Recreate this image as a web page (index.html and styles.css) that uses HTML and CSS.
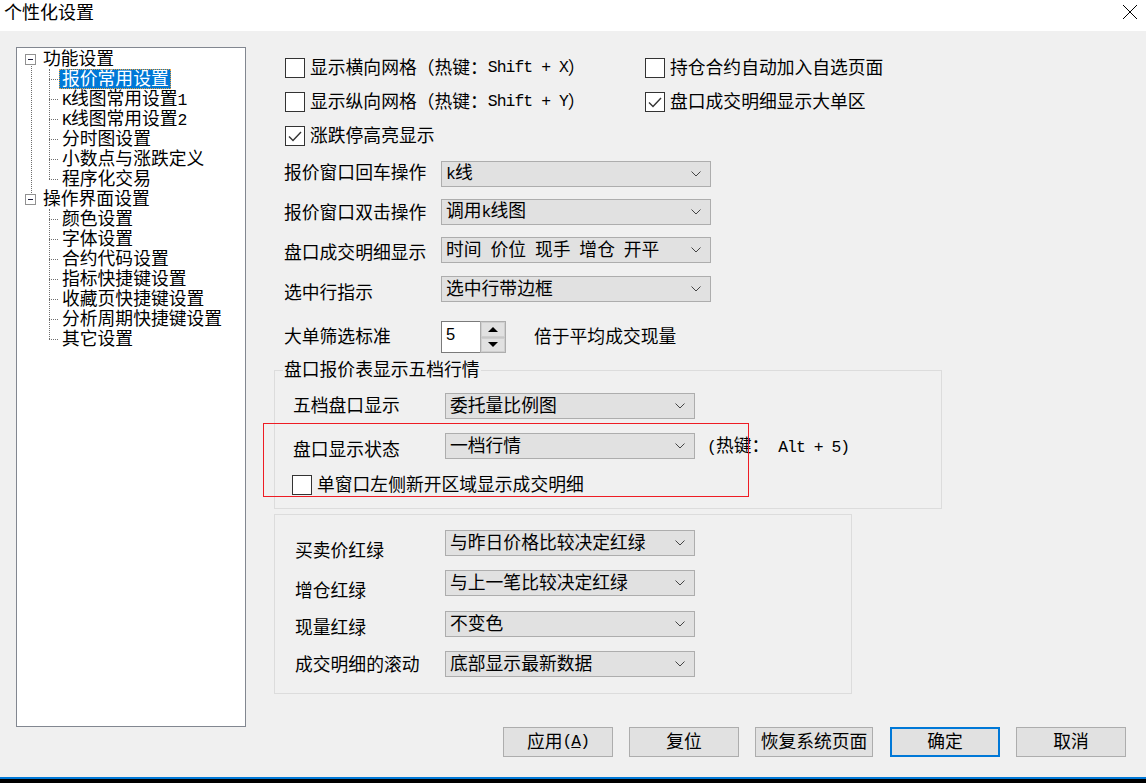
FILE: index.html
```html
<!DOCTYPE html>
<html lang="zh-CN">
<head>
<meta charset="utf-8">
<title>个性化设置</title>
<link rel="stylesheet" href="styles.css">
</head>
<body>
<div class="window">
  <header class="titlebar">
    <span class="title">个性化设置</span>
    <svg class="close" width="16" height="16" viewBox="0 0 16 16"><path d="M1 1L15 15M15 1L1 15" stroke="#000" stroke-width="1" fill="none"/></svg>
  </header>

  <div class="main">
    <nav class="tree">
      <ul class="roots">
        <li class="root has-next">
          <div class="node">
            <svg class="exp" width="11" height="11" viewBox="0 0 11 11"><rect x="0.5" y="0.5" width="10" height="10" fill="#fff" stroke="#919191"/><path d="M3 5.5H8" stroke="#1e1e3c"/></svg>
            <span class="label">功能设置</span>
          </div>
          <ul class="children">
            <li><span class="label sel">报价常用设置</span></li>
            <li><span class="label"><span class="m">K</span>线图常用设置<span class="m">1</span></span></li>
            <li><span class="label"><span class="m">K</span>线图常用设置<span class="m">2</span></span></li>
            <li><span class="label">分时图设置</span></li>
            <li><span class="label">小数点与涨跌定义</span></li>
            <li><span class="label">程序化交易</span></li>
          </ul>
        </li>
        <li class="root">
          <div class="node">
            <svg class="exp" width="11" height="11" viewBox="0 0 11 11"><rect x="0.5" y="0.5" width="10" height="10" fill="#fff" stroke="#919191"/><path d="M3 5.5H8" stroke="#1e1e3c"/></svg>
            <span class="label">操作界面设置</span>
          </div>
          <ul class="children">
            <li><span class="label">颜色设置</span></li>
            <li><span class="label">字体设置</span></li>
            <li><span class="label">合约代码设置</span></li>
            <li><span class="label">指标快捷键设置</span></li>
            <li><span class="label">收藏页快捷键设置</span></li>
            <li><span class="label">分析周期快捷键设置</span></li>
            <li><span class="label">其它设置</span></li>
          </ul>
        </li>
      </ul>
    </nav>

    <section class="panel">
      <div class="checks">
        <div class="check-row">
          <div class="cb wide"><span class="box"></span>显示横向网格（热键：<span class="m"> Shift + X</span>）</div>
          <div class="cb"><span class="box"></span>持仓合约自动加入自选页面</div>
        </div>
        <div class="check-row">
          <div class="cb wide"><span class="box"></span>显示纵向网格（热键：<span class="m"> Shift + Y</span>）</div>
          <div class="cb"><span class="box"><svg width="18" height="18" viewBox="0 0 18 18"><path d="M3 9.5L7 13.5L15 5" fill="none" stroke="#333" stroke-width="1.4"/></svg></span>盘口成交明细显示大单区</div>
        </div>
        <div class="check-row">
          <div class="cb"><span class="box"><svg width="18" height="18" viewBox="0 0 18 18"><path d="M3 9.5L7 13.5L15 5" fill="none" stroke="#333" stroke-width="1.4"/></svg></span>涨跌停高亮显示</div>
        </div>
      </div>

      <div class="fields">
        <div class="f-labels">
          <div>报价窗口回车操作</div>
          <div>报价窗口双击操作</div>
          <div>盘口成交明细显示</div>
          <div>选中行指示</div>
        </div>
        <div class="f-combos">
          <div class="combo w270"><span><span class="m">k</span>线</span><svg class="chev" width="10" height="6" viewBox="0 0 10 6"><path d="M0.5 0.5L5 5L9.5 0.5" fill="none" stroke="#444"/></svg></div>
          <div class="combo w270"><span>调用<span class="m">k</span>线图</span><svg class="chev" width="10" height="6" viewBox="0 0 10 6"><path d="M0.5 0.5L5 5L9.5 0.5" fill="none" stroke="#444"/></svg></div>
          <div class="combo w270"><span>时间&ensp;价位&ensp;现手&ensp;增仓&ensp;开平</span><svg class="chev" width="10" height="6" viewBox="0 0 10 6"><path d="M0.5 0.5L5 5L9.5 0.5" fill="none" stroke="#444"/></svg></div>
          <div class="combo w270 last"><span>选中行带边框</span><svg class="chev" width="10" height="6" viewBox="0 0 10 6"><path d="M0.5 0.5L5 5L9.5 0.5" fill="none" stroke="#444"/></svg></div>
        </div>
      </div>

      <div class="spin-row">
        <span class="lbl">大单筛选标准</span>
        <div class="spin">
          <div class="spin-edit">5</div>
          <div class="spin-btns">
            <span><svg width="10" height="5" viewBox="0 0 10 5"><path d="M5 0L10 5H0Z" fill="#000"/></svg></span>
            <span><svg width="10" height="5" viewBox="0 0 10 5"><path d="M0 0H10L5 5Z" fill="#000"/></svg></span>
          </div>
        </div>
        <span class="spin-note">倍于平均成交现量</span>
      </div>

      <fieldset class="group1">
        <legend>盘口报价表显示五档行情</legend>
        <div class="g1-body">
          <div class="row">
            <span class="lbl">五档盘口显示</span>
            <div class="combo w250"><span>委托量比例图</span><svg class="chev" width="10" height="6" viewBox="0 0 10 6"><path d="M0.5 0.5L5 5L9.5 0.5" fill="none" stroke="#444"/></svg></div>
          </div>
          <div class="row gap14">
            <span class="lbl dn4">盘口显示状态</span>
            <div class="combo w250"><span>一档行情</span><svg class="chev" width="10" height="6" viewBox="0 0 10 6"><path d="M0.5 0.5L5 5L9.5 0.5" fill="none" stroke="#444"/></svg></div>
            <span class="hotkey"><span class="m">(</span>热键：<span class="m"> Alt + 5)</span></span>
          </div>
          <div class="cb g1-cb"><span class="box"></span>单窗口左侧新开区域显示成交明细</div>
        </div>
      </fieldset>

      <div class="group2">
        <div class="row">
          <span class="lbl dn8">买卖价红绿</span>
          <div class="combo w250"><span>与昨日价格比较决定红绿</span><svg class="chev" width="10" height="6" viewBox="0 0 10 6"><path d="M0.5 0.5L5 5L9.5 0.5" fill="none" stroke="#444"/></svg></div>
        </div>
        <div class="row gap14">
          <span class="lbl dn8">增仓红绿</span>
          <div class="combo w250"><span>与上一笔比较决定红绿</span><svg class="chev" width="10" height="6" viewBox="0 0 10 6"><path d="M0.5 0.5L5 5L9.5 0.5" fill="none" stroke="#444"/></svg></div>
        </div>
        <div class="row gap15">
          <span class="lbl dn4">现量红绿</span>
          <div class="combo w250"><span>不变色</span><svg class="chev" width="10" height="6" viewBox="0 0 10 6"><path d="M0.5 0.5L5 5L9.5 0.5" fill="none" stroke="#444"/></svg></div>
        </div>
        <div class="row gap14">
          <span class="lbl dn1">成交明细的滚动</span>
          <div class="combo w250"><span>底部显示最新数据</span><svg class="chev" width="10" height="6" viewBox="0 0 10 6"><path d="M0.5 0.5L5 5L9.5 0.5" fill="none" stroke="#444"/></svg></div>
        </div>
      </div>

      <div class="mark"></div>
    </section>
  </div>

  <footer class="footer">
    <div class="btn">应用<span class="m">(<span class="u">A</span>)</span></div>
    <div class="btn">复位</div>
    <div class="btn wide">恢复系统页面</div>
    <div class="btn default">确定</div>
    <div class="btn">取消</div>
  </footer>
  <div class="spacer"></div>
  <div class="taskbar"></div>
</div>
</body>
</html>
```

FILE: styles.css
```css
* { box-sizing: border-box; }
html, body { margin: 0; padding: 0; }
body {
  width: 1146px;
  height: 783px;
  overflow: hidden;
  background: #f0f0f0;
  font-family: "Liberation Sans", "Noto Sans CJK SC", "Noto Sans CJK JP", sans-serif;
  font-size: 17.8px;
  color: #000;
}
.window { display: flex; flex-direction: column; height: 783px; }

/* title bar */
.titlebar {
  flex: none;
  height: 31px;
  background: #fff;
  display: flex;
  justify-content: space-between;
  align-items: flex-start;
  padding: 0 8px 0 4px;
}
.title { font-size: 18px; line-height: 22px; padding-top: 2px; }
.close { margin-top: 4px; }

/* main area */
.main { flex: none; display: flex; margin-top: 16px; padding-left: 16px; height: 680px; }

/* tree */
.tree {
  flex: none;
  width: 230px;
  height: 680px;
  border: 1px solid #828790;
  background: #fff;
  padding: 1px 0 0 8px;
}
ul { list-style: none; margin: 0; padding: 0; }
.root { position: relative; }
.root.has-next::after {
  content: "";
  position: absolute;
  left: 6px;
  top: 17px;
  bottom: -6px;
  border-left: 1px dotted #6e6e6e;
}
.node { height: 20px; display: flex; align-items: center; }
.exp { flex: none; margin-right: 7px; }
.label {
  display: inline-block;
  height: 20px;
  line-height: 20px;
  white-space: nowrap;
}
.children { position: relative; padding-left: 34px; }
.children::before {
  content: "";
  position: absolute;
  left: 24px;
  top: 0;
  bottom: 10px;
  border-left: 1px dotted #6e6e6e;
}
.children li { position: relative; height: 20px; display: flex; align-items: center; }
.children li::before {
  content: "";
  position: absolute;
  left: -10px;
  top: 10px;
  width: 9px;
  border-top: 1px dotted #6e6e6e;
}
.children .label { padding: 0 2px 0 3px; }
.sel { background: #0078d7; color: #fff; outline: 1px dotted #f2a33a; outline-offset: -1px; }

.m { font-family: "Liberation Mono", monospace; font-size: 16.4px; letter-spacing: -0.95px; }
.u { text-decoration: underline; }

/* right panel */
.panel { position: relative; margin-left: 28px; padding-top: 11px; width: 690px; }
.checks { padding-left: 11px; display: flex; flex-direction: column; gap: 14px; }
.check-row { display: flex; }
.cb { display: flex; align-items: center; height: 20px; line-height: 20px; white-space: nowrap; }
.cb.wide { width: 360px; }
.box {
  flex: none;
  width: 20px;
  height: 20px;
  border: 1px solid #333;
  background: #fff;
  margin-right: 5px;
  display: flex;
  align-items: center;
  justify-content: center;
}

.fields { display: flex; margin-top: 7px; padding-left: 10px; }
.f-labels { width: 157px; flex: none; }
.f-labels div { height: 40px; line-height: 40px; white-space: nowrap; }
.f-combos { padding-top: 8px; display: flex; flex-direction: column; gap: 12px; }
.f-combos .last { margin-top: 1px; }

.combo {
  flex: none;
  height: 26px;
  border: 1px solid #adadad;
  background: #e1e1e1;
  display: flex;
  align-items: center;
  justify-content: space-between;
  padding: 0 9px 0 4px;
  white-space: nowrap;
  line-height: 24px;
}
.combo.w270 { width: 270px; }
.combo.w250 { width: 250px; }
.chev { flex: none; }

/* spinner */
.spin-row { display: flex; align-items: center; height: 32px; margin-top: 8px; padding-left: 10px; }
.spin-row .lbl { width: 157px; flex: none; line-height: 20px; }
.spin { display: flex; height: 32px; width: 65px; flex: none; }
.spin-edit {
  width: 39px;
  border: 1px solid #7a7a7a;
  border-right: 0;
  background: #fff;
  font-family: "Liberation Sans", sans-serif;
  font-size: 16.5px;
  line-height: 20px;
  padding: 2px 0 0 4px;
}
.spin-btns {
  width: 26px;
  border: 1px solid #adadad;
  display: flex;
  flex-direction: column;
  gap: 1px;
  background: #c8c8c8;
}
.spin-btns span {
  flex: 1;
  background: #e1e1e1;
  border: 1px solid #cfcfcf;
  display: flex;
  align-items: center;
  justify-content: center;
}
.spin-note { margin-left: 28px; line-height: 20px; }

/* group 1 */
.group1 {
  margin: 7px 0 0 0;
  padding: 0;
  border: 1px solid #dcdcdc;
  width: 668px;
  min-inline-size: 0;
}
.group1 legend { margin-left: 8px; padding: 0 1px; line-height: 20px; }
.g1-body { padding: 13px 0 13px 18px; }
.row { display: flex; align-items: flex-start; height: 26px; }
.row .lbl { width: 152px; flex: none; line-height: 26px; white-space: nowrap; }
.gap14 { margin-top: 14px; }
.gap15 { margin-top: 15px; }
.dn1 { margin-top: 1px; }
.dn4 { margin-top: 4px; }
.dn8 { margin-top: 8px; }
.hotkey { margin-left: 12px; line-height: 26px; white-space: nowrap; }
.g1-cb { margin-top: 16px; margin-left: -1px; }

/* group 2 */
.group2 {
  margin-top: 5px;
  border: 1px solid #dcdcdc;
  width: 578px;
  padding: 15px 0 16px 20px;
}
.group2 .row .lbl { width: 150px; }

/* red annotation */
.mark {
  position: absolute;
  left: -11px;
  top: 376px;
  width: 486px;
  height: 74px;
  border: 1px solid #ee1c24;
}

/* footer */
.footer {
  flex: none;
  display: flex;
  justify-content: flex-end;
  gap: 16px;
  padding-right: 20px;
  height: 30px;
}
.btn {
  width: 110px;
  height: 30px;
  border: 1px solid #adadad;
  background: #e1e1e1;
  display: flex;
  align-items: center;
  justify-content: center;
  white-space: nowrap;
  line-height: 20px;
}
.btn.wide { width: 118px; margin-right: 1px; }
.btn.default { border: 2px solid #0078d7; }
.spacer { flex: 1; }
.taskbar { flex: none; height: 6px; border-top: 2px solid #0078d7; background: #000; }
```
